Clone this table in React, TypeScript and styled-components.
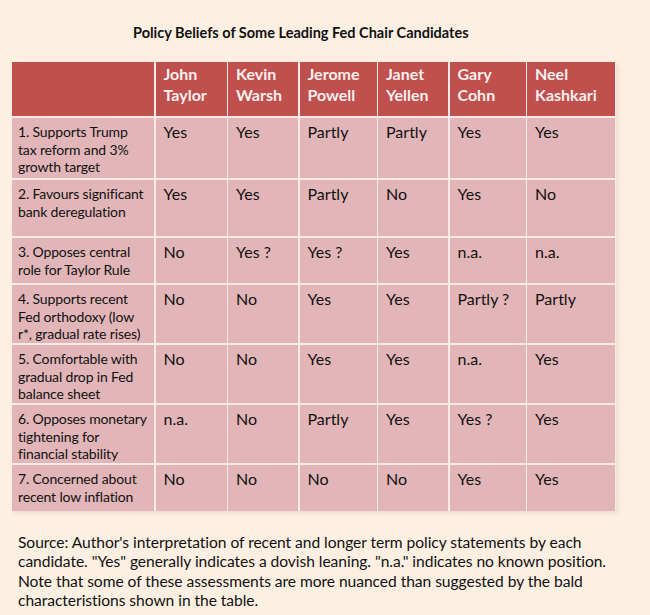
import React from "react";
import styled, { createGlobalStyle } from "styled-components";

const Global = createGlobalStyle`
  html, body { margin: 0; padding: 0; background: #fdf0e3; }
  body { font-family: "Lato", "Liberation Sans", sans-serif; color: #111; }
`;

const Page = styled.div`
  width: 650px;
  height: 615px;
  background: #fdf0e3;
  padding: 23px 0 0 0;
  box-sizing: border-box;
  display: flex;
  flex-direction: column;
`;

const Title = styled.h1`
  margin: 0 0 0 133px;
  font-size: 14.5px;
  font-weight: 700;
  line-height: 20px;
  color: #111;
  white-space: nowrap;
`;

const Table = styled.div`
  margin: 19px 0 0 12px;
  width: 604px;
  display: grid;
  grid-template-columns: 142px 71px 70px 77px 70px 76px 88px;
  grid-template-rows: 54px 60px 56px 45px 58px 58px 58px 46px;
  gap: 2px 1.5px;
  background: #f8eae8;
  box-shadow: 2px 2px 4px rgba(200, 150, 150, 0.25);
`;

const HeadCell = styled.div`
  background: #c0504d;
  color: #fcefef;
  font-weight: 700;
  font-size: 16px;
  line-height: 21px;
  padding: 1px 8px 0;
`;

const LabelCell = styled.div`
  background: #e2b6b8;
  font-size: 14px;
  line-height: 17.5px;
  padding: 5px 4px 0 6px;
  white-space: nowrap;
  letter-spacing: -0.15px;
`;

const ValueCell = styled.div`
  background: #e2b6b8;
  font-size: 16px;
  line-height: 20px;
  padding: 4px 8px 0;
  white-space: nowrap;
`;

const Note = styled.p`
  margin: 22px 0 0 18px;
  font-size: 15.6px;
  line-height: 19.4px;
  color: #111;
  white-space: nowrap;
  letter-spacing: -0.05px;
`;

const candidates = [
  ["John", "Taylor"],
  ["Kevin", "Warsh"],
  ["Jerome", "Powell"],
  ["Janet", "Yellen"],
  ["Gary", "Cohn"],
  ["Neel", "Kashkari"],
];

const rows: { label: string[]; values: string[] }[] = [
  {
    label: ["1. Supports Trump", "tax reform and 3%", "growth target"],
    values: ["Yes", "Yes", "Partly", "Partly", "Yes", "Yes"],
  },
  {
    label: ["2. Favours significant", "bank deregulation"],
    values: ["Yes", "Yes", "Partly", "No", "Yes", "No"],
  },
  {
    label: ["3. Opposes central", "role for Taylor Rule"],
    values: ["No", "Yes ?", "Yes ?", "Yes", "n.a.", "n.a."],
  },
  {
    label: ["4. Supports recent", "Fed orthodoxy (low", "r*, gradual rate rises)"],
    values: ["No", "No", "Yes", "Yes", "Partly ?", "Partly"],
  },
  {
    label: ["5. Comfortable with", "gradual drop in Fed", "balance sheet"],
    values: ["No", "No", "Yes", "Yes", "n.a.", "Yes"],
  },
  {
    label: ["6. Opposes monetary", "tightening for", "financial stability"],
    values: ["n.a.", "No", "Partly", "Yes", "Yes ?", "Yes"],
  },
  {
    label: ["7. Concerned about", "recent low inflation"],
    values: ["No", "No", "No", "No", "Yes", "Yes"],
  },
];

const Lines = ({ lines }: { lines: string[] }) => (
  <>
    {lines.map((l, i) => (
      <React.Fragment key={i}>
        {i > 0 && <br />}
        {l}
      </React.Fragment>
    ))}
  </>
);

export default function App() {
  return (
    <Page>
      <Global />
      <Title>Policy Beliefs of Some Leading Fed Chair Candidates</Title>
      <Table>
        <HeadCell />
        {candidates.map((c, i) => (
          <HeadCell key={i}>
            <Lines lines={c} />
          </HeadCell>
        ))}
        {rows.map((r, i) => (
          <React.Fragment key={i}>
            <LabelCell>
              <Lines lines={r.label} />
            </LabelCell>
            {r.values.map((v, j) => (
              <ValueCell key={j}>{v}</ValueCell>
            ))}
          </React.Fragment>
        ))}
      </Table>
      <Note>
        <Lines
          lines={[
            "Source: Author's interpretation of recent and longer term policy statements by each",
            'candidate. "Yes" generally indicates a dovish leaning. "n.a." indicates no known position.',
            "Note that some of these assessments are more nuanced than suggested by the bald",
            "characteristions shown in the table.",
          ]}
        />
      </Note>
    </Page>
  );
}
